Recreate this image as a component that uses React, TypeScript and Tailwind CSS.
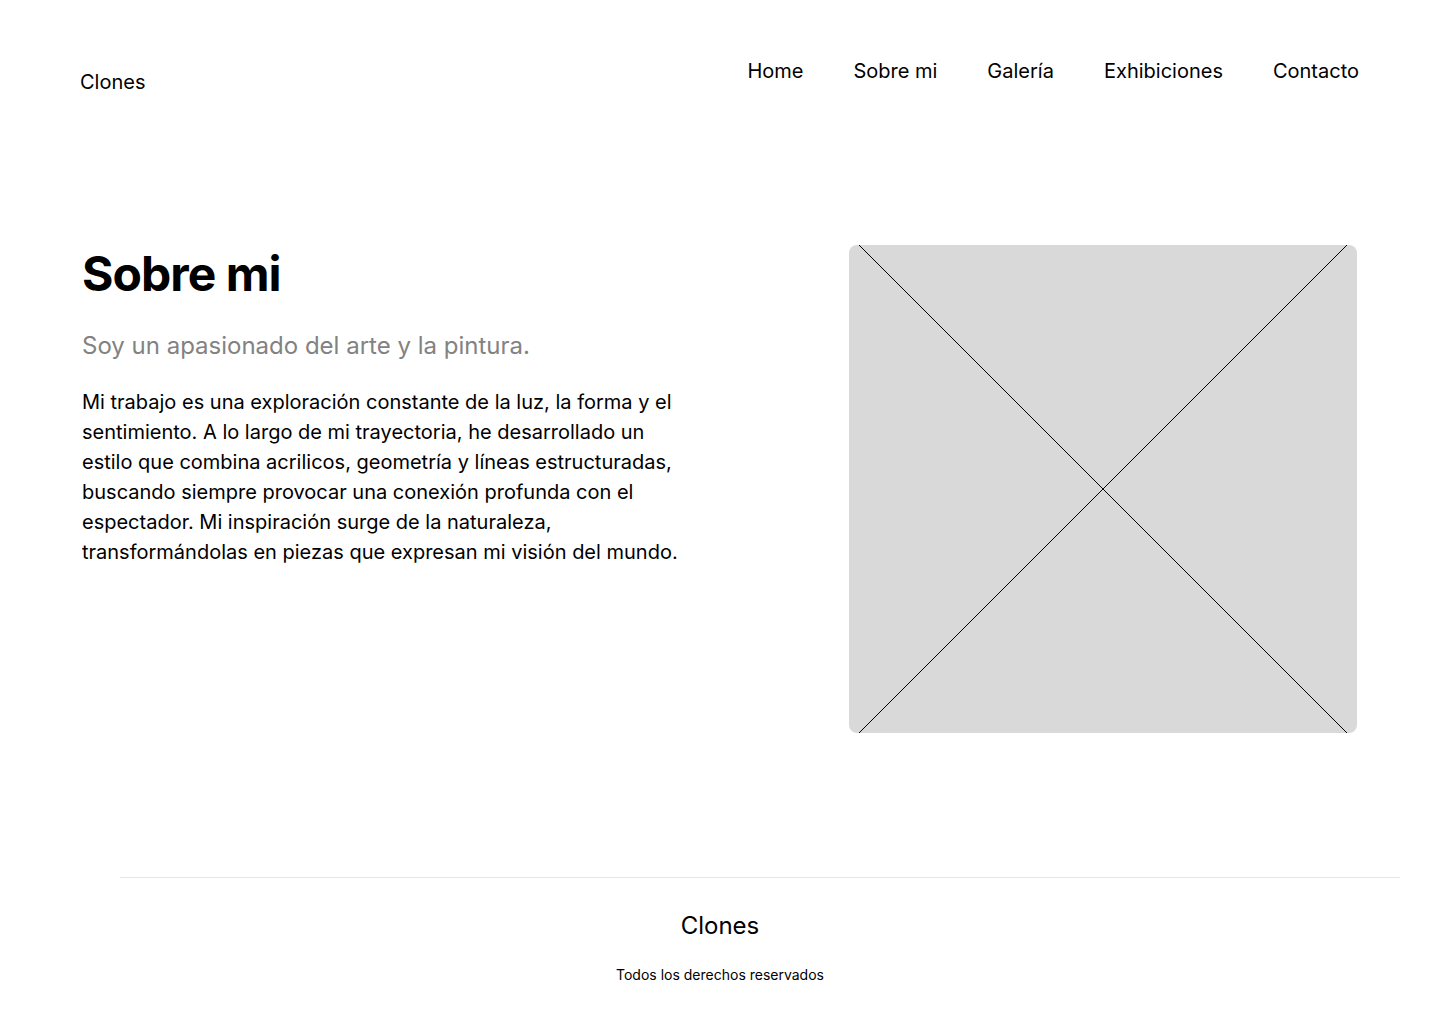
const navItems = ["Home", "Sobre mi", "Galería", "Exhibiciones", "Contacto"];

function ImagePlaceholder() {
  return (
    <div className="relative w-[508px] h-[488px] shrink-0 rounded-lg bg-[#d9d9d9] overflow-hidden">
      <svg
        className="absolute inset-0"
        width="508"
        height="488"
        viewBox="0 0 508 488"
        fill="none"
      >
        <line x1="10" y1="0" x2="498" y2="488" stroke="#000" strokeWidth="1" />
        <line x1="498" y1="0" x2="10" y2="488" stroke="#000" strokeWidth="1" />
      </svg>
    </div>
  );
}

export default function App() {
  return (
    <div className="min-h-[1032px] bg-white text-black font-['Inter','Liberation_Sans',sans-serif]">
      <header className="flex items-start justify-between pl-[80px] pr-[81px] pt-[57px]">
        <div className="mt-[11px] text-[20px] leading-[28px]">Clones</div>
        <nav className="flex gap-[50px] text-[20px] leading-[28px]">
          {navItems.map((item) => (
            <a key={item} href="#">
              {item}
            </a>
          ))}
        </nav>
      </header>

      <main className="mt-[149px] flex items-start justify-between pl-[82px] pr-[83px]">
        <div className="w-[605px]">
          <h1 className="mt-[5px] text-[48px] leading-none font-bold tracking-[-0.02em]">
            Sobre mi
          </h1>
          <p className="mt-[32px] text-[24px] leading-[32px] text-[#828282]">
            Soy un apasionado del arte y la pintura.
          </p>
          <p className="mt-[25px] text-[20px] leading-[30px]">
            Mi trabajo es una exploración constante de la luz, la forma y el
            sentimiento. A lo largo de mi trayectoria, he desarrollado un estilo
            que combina acrilicos, geometría y líneas estructuradas, buscando
            siempre provocar una conexión profunda con el espectador. Mi
            inspiración surge de la naturaleza, transformándolas en piezas que
            expresan mi visión del mundo.
          </p>
        </div>
        <ImagePlaceholder />
      </main>

      <footer className="mt-[144px]">
        <div className="ml-[120px] mr-[40px] border-t border-[#e6e6e6]" />
        <div className="pt-[32px] text-center text-[24px] leading-[32px]">Clones</div>
        <div className="mt-[23px] text-center text-[14px] leading-[20px]">
          Todos los derechos reservados
        </div>
      </footer>
    </div>
  );
}
